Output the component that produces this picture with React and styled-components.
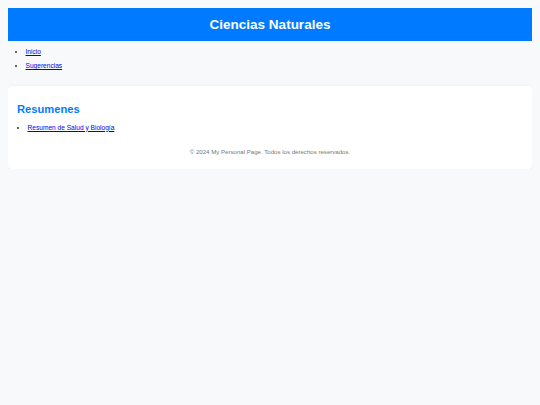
import React from 'react';
import styled, { createGlobalStyle } from 'styled-components';

const GlobalStyle = createGlobalStyle`
    html, body {
        background: #f8f9fa;
    }
    body {
        margin: 8px;
        font-family: "Liberation Sans", Arial, sans-serif;
        color: #333;
    }
`;

const Header = styled.header`
    height: 33px;
    background: #007bff;
    display: flex;
    align-items: center;
    justify-content: center;
`;

const Title = styled.h1`
    margin: 0;
    font-size: 13.5px;
    font-weight: bold;
    color: #fff;
`;

const NavList = styled.ul`
    margin: 3.5px 0 12.5px;
    padding-left: 17.5px;
`;

const NavItem = styled.li`
    font-size: 6.6px;
    line-height: 14.5px;
`;

const Link = styled.a`
    color: #0000ee;
    text-decoration: underline;
`;

const Card = styled.section`
    background: #fff;
    border-radius: 4px;
    box-shadow: 0 1px 5px rgba(0, 0, 0, 0.08);
    padding: 9px 9px 14px;
`;

const CardTitle = styled.h2`
    margin: 7.5px 0 8px;
    font-size: 11.2px;
    line-height: 13px;
    color: #007bff;
`;

const SummaryList = styled.ul`
    margin: 0;
    padding-left: 10.5px;
`;

const SummaryItem = styled.li`
    font-size: 6.6px;
    line-height: 8px;
`;

const Footer = styled.footer`
    margin-top: 16.2px;
    text-align: center;
    font-size: 6.1px;
    line-height: 7px;
    color: #777;
`;

const App = () => {
    return (
        <>
            <GlobalStyle />
            <Header>
                <Title>Ciencias Naturales</Title>
            </Header>

            <nav>
                <NavList>
                    <NavItem><Link href="#">Inicio</Link></NavItem>
                    <NavItem><Link href="#">Sugerencias</Link></NavItem>
                </NavList>
            </nav>

            <Card>
                <CardTitle>Resumenes</CardTitle>
                <SummaryList>
                    <SummaryItem>
                        <Link href="#">Resumen de Salud y Biología</Link>
                    </SummaryItem>
                </SummaryList>
                <Footer>© 2024 My Personal Page. Todos los derechos reservados.</Footer>
            </Card>
        </>
    );
};

export default App;
